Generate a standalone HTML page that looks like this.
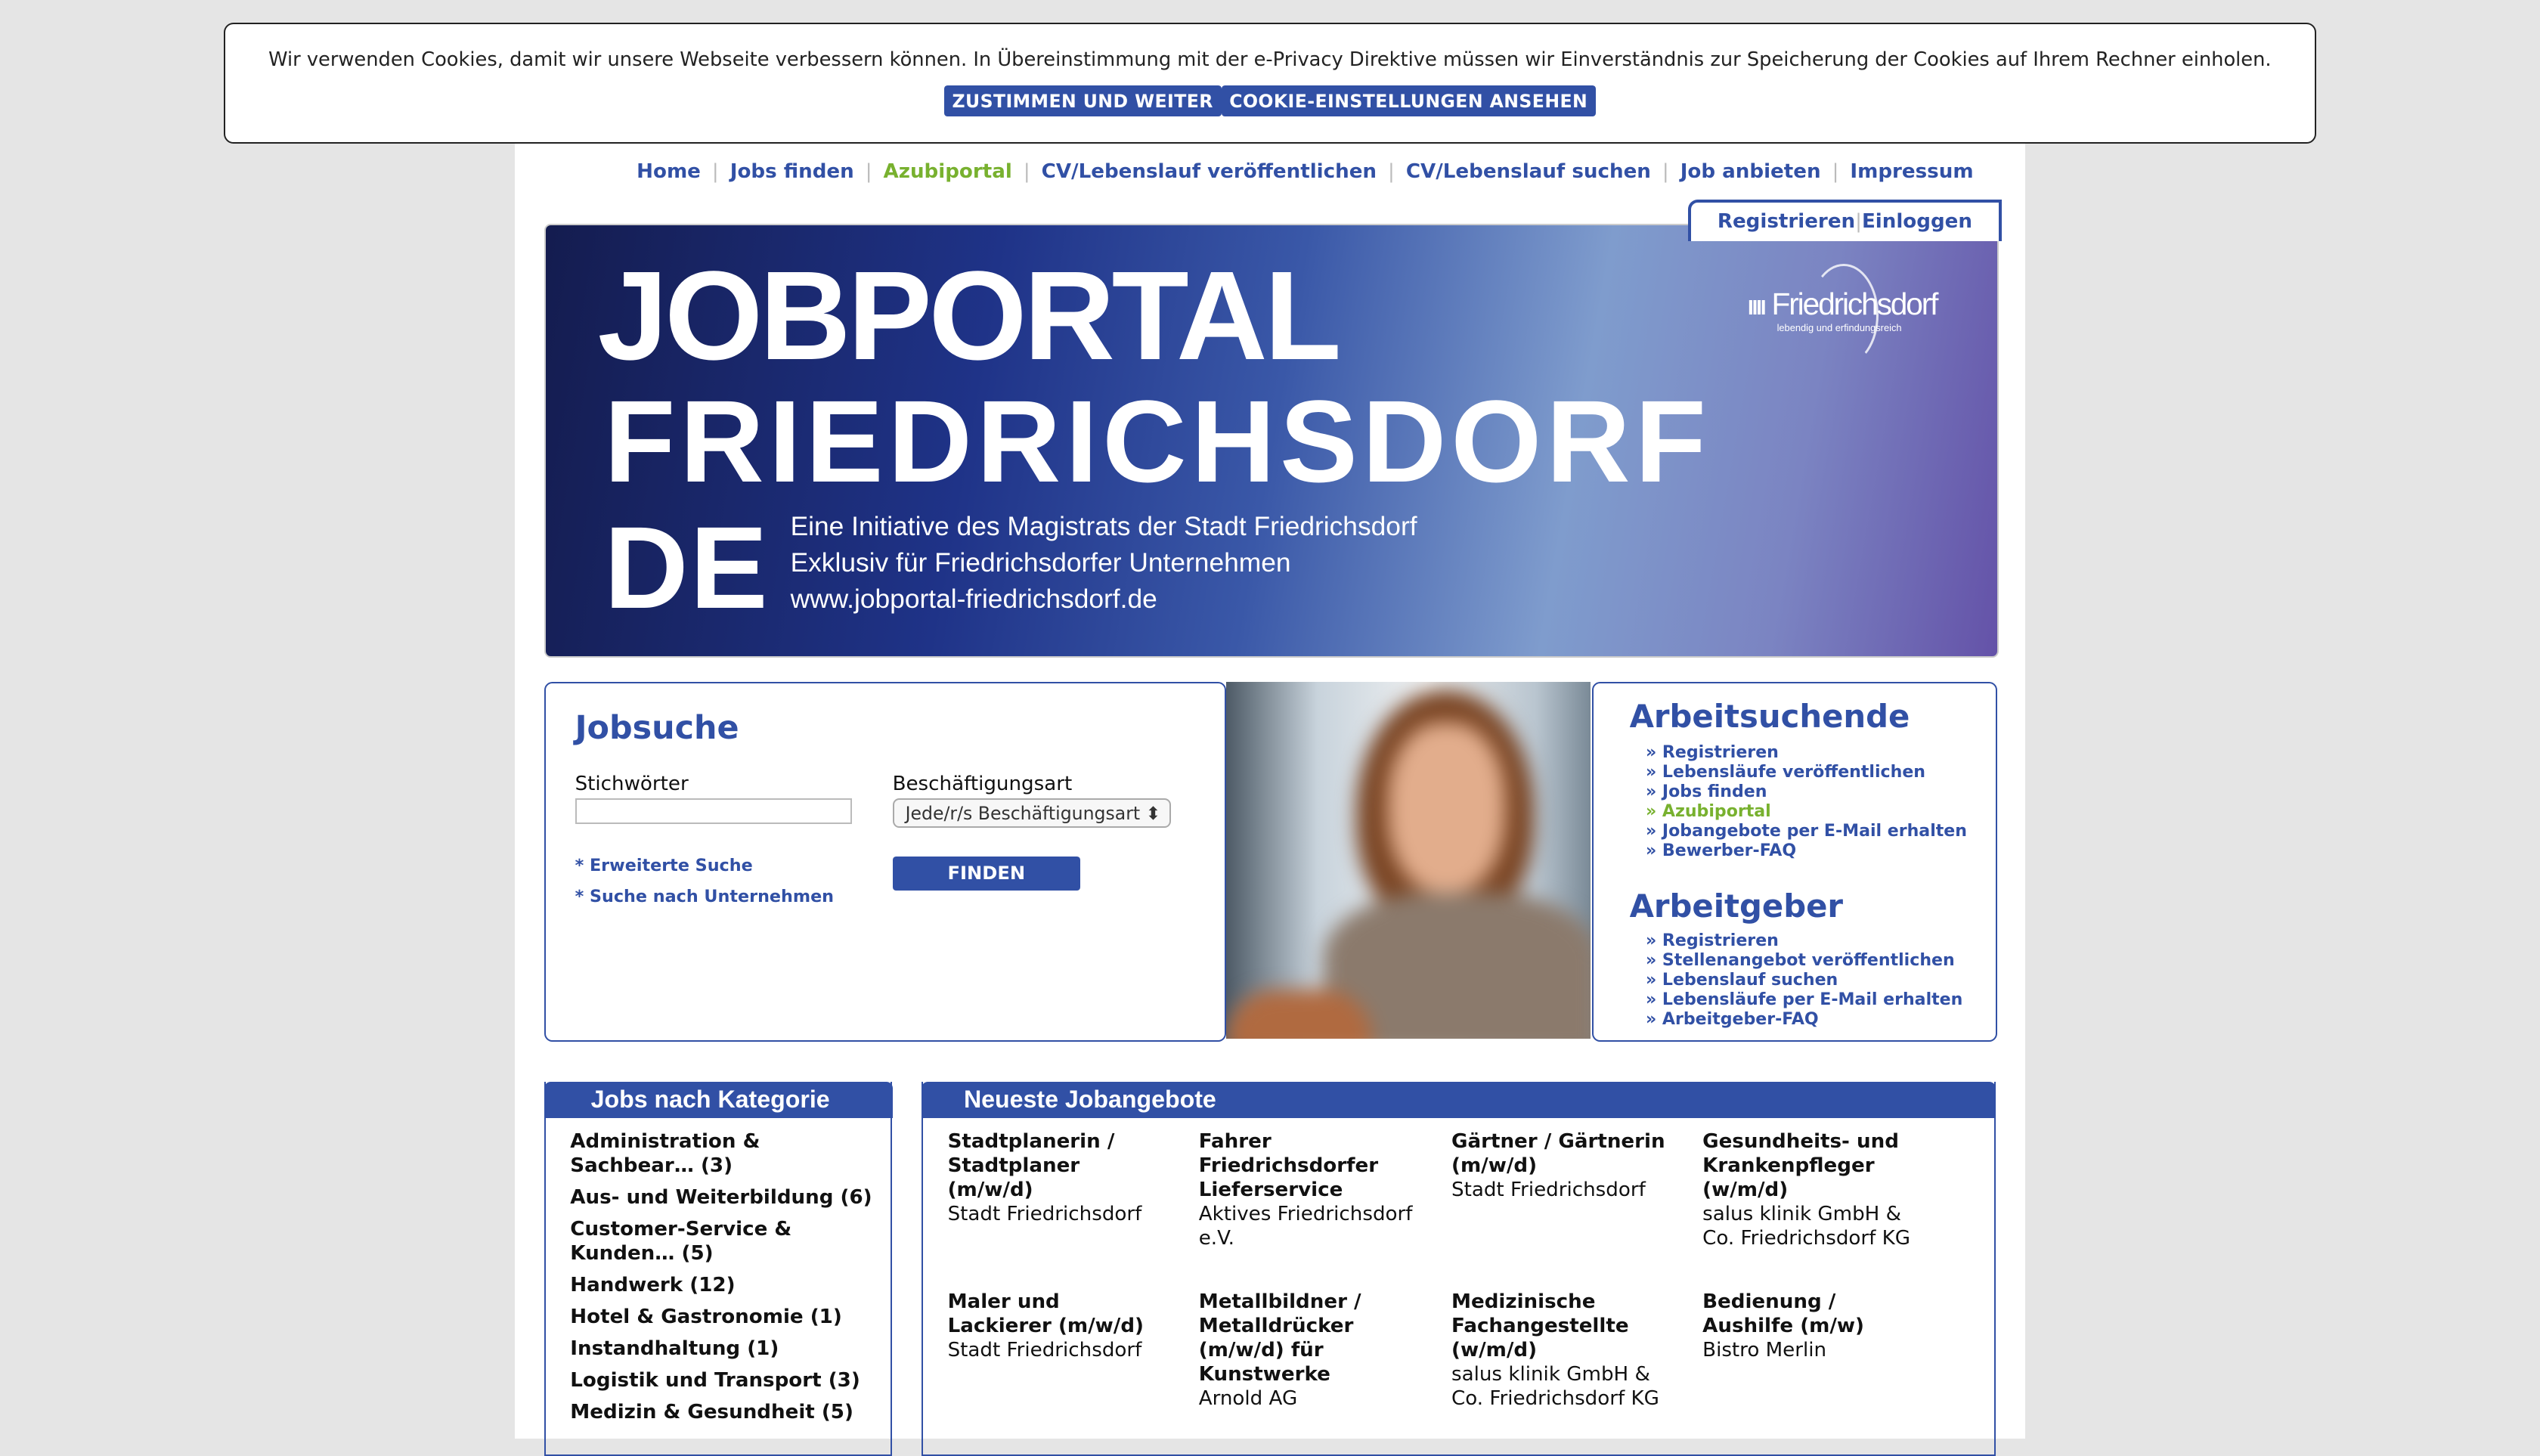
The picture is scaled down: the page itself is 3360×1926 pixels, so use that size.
<!DOCTYPE html>
<html><head><meta charset="utf-8"><style>
html{zoom:2.142857}
body{margin:0;width:1568px;height:880px;background:#e5e5e5;font-family:"DejaVu Sans","Liberation Sans",sans-serif;position:relative;overflow:hidden}
.a{position:absolute}
.b{color:#3150a5}
.g{color:#78b12f}
#page{left:318px;top:88px;width:932px;height:800px;background:#fff}
#cookie{left:138px;top:14px;width:1290px;height:73px;background:#fff;border:1px solid #222;border-radius:6px;font-size:12px;color:#222;text-align:center}
.btn{display:inline-block;background:#3150a5;color:#fff;font-weight:bold;font-size:11px;padding:3px 5px;border-radius:2px;letter-spacing:.2px}
#nav{top:99px;left:393px;font-size:12.2px;font-weight:bold;white-space:nowrap}
#nav span.s{color:#bbb;font-weight:normal;margin:0 7px}
#banner{left:336px;top:138px;width:896px;height:266px;border-radius:4px;border:1px solid #ccc;overflow:hidden;background:linear-gradient(100deg,#141c4f 0%,#1f3388 30%,#3a58a8 50%,#7f9ccd 70%,#7b84c2 85%,#6452a8 100%)}
.big{color:#fff;font-family:"Liberation Sans",sans-serif;font-weight:bold;letter-spacing:-2px}
.box{border:1px solid #3150a5;border-radius:5px;background:#fff}
.side li{list-style:none;font-size:10.3px;font-weight:bold;line-height:12.1px;white-space:nowrap}
.hd{background:#3150a5;color:#fff;font-weight:bold;font-size:15px;font-family:"Liberation Sans",sans-serif;border-radius:4px 4px 0 0;height:22px;line-height:22px}
.cat div{font-size:12.2px;font-weight:bold;color:#111;line-height:15px;margin-bottom:4.6px}
.job{font-size:12.2px;line-height:15px;color:#111;width:150px}
.job b{display:block}
</style></head><body>
<div id="page" class="a"></div>
<div id="cookie" class="a">
<div style="margin-top:15px">Wir verwenden Cookies, damit wir unsere Webseite verbessern können. In Übereinstimmung mit der e-Privacy Direktive müssen wir Einverständnis zur Speicherung der Cookies auf Ihrem Rechner einholen.</div>
<div style="margin-top:9px"><span class="btn">ZUSTIMMEN UND WEITER</span><span class="btn">COOKIE-EINSTELLUNGEN ANSEHEN</span></div>
</div>
<div id="nav" class="a b">Home<span class="s">|</span>Jobs finden<span class="s">|</span><span class="g">Azubiportal</span><span class="s">|</span>CV/Lebenslauf veröffentlichen<span class="s">|</span>CV/Lebenslauf suchen<span class="s">|</span>Job anbieten<span class="s">|</span>Impressum</div>
<div id="banner" class="a">
<div class="a big" style="left:32px;top:12px;font-size:78px">JOBPORTAL</div>
<div class="a big" style="left:36px;top:92px;font-size:72px;letter-spacing:2.8px">FRIEDRICHSDORF</div>
<div class="a big" style="left:36px;top:170px;font-size:72px;letter-spacing:1px">DE</div>
<div class="a" style="left:151px;top:175px;color:#fff;font-family:'Liberation Sans',sans-serif;font-size:16.5px;line-height:22.5px">Eine Initiative des Magistrats der Stadt Friedrichsdorf<br>Exklusiv für Friedrichsdorfer Unternehmen<br>www.jobportal-friedrichsdorf.de</div>
<div class="a" style="left:742px;top:38px;color:#fff;font-family:'Liberation Sans',sans-serif;font-size:19px;letter-spacing:-1px"><span style="font-size:13px;font-weight:bold">IIII</span> Friedrichsdorf<div style="font-size:6px;letter-spacing:0;margin-left:18px">lebendig und erfindungsreich</div></div>
<div class="a" style="left:780px;top:24px;width:40px;height:60px;border:1.5px solid #fff;border-radius:50%;border-left-color:transparent;border-bottom-color:transparent;opacity:.8"></div>
</div>
<div class="a b" style="left:1042px;top:123px;width:190px;height:24px;border:2px solid #3150a5;border-bottom:none;border-radius:6px 0 0 0;font-size:12.2px;font-weight:bold;text-align:center;line-height:24px;background:#fff;z-index:2;white-space:nowrap">Registrieren<span style="color:#bbb;font-weight:normal">|</span>Einloggen</div>
<div class="a box" style="left:336px;top:421px;width:419px;height:220px">
<div class="a b" style="left:18px;top:16px;font-size:20px;font-weight:bold">Jobsuche</div>
<div class="a" style="left:18px;top:55px;font-size:12.2px;color:#111">Stichwörter</div>
<div class="a" style="left:18px;top:71px;width:169px;height:14px;border:1px solid #bbb"></div>
<div class="a" style="left:214px;top:55px;font-size:12.2px;color:#111">Beschäftigungsart</div>
<div class="a" style="left:214px;top:71px;height:18px;border:1px solid #aaa;border-radius:4px;background:#f7f7f7;font-size:11px;color:#333;line-height:17px;padding-left:7px;box-sizing:border-box;width:172px;white-space:nowrap;overflow:hidden">Jede/r/s Beschäftigungsart ⬍</div>
<div class="a b" style="left:18px;top:103px;font-size:10.4px;font-weight:bold;line-height:19px">* Erweiterte Suche<br>* Suche nach Unternehmen</div>
<div class="a" style="left:214px;top:107px;width:116px;height:21px;background:#3150a5;border-radius:2px;color:#fff;font-weight:bold;font-size:11.3px;text-align:center;line-height:21px">FINDEN</div>
</div>
<div class="a" style="left:757px;top:421px;width:225px;height:220px;overflow:hidden;background:linear-gradient(90deg,#4d5a66 0%,#c8d3dc 25%,#eef0f1 55%,#b9c5cf 85%,#7a8a97 100%)">
<div class="a" style="left:0;top:0;width:225px;height:220px;filter:blur(6px)">
<div class="a" style="left:80px;top:5px;width:110px;height:150px;border-radius:50% 50% 45% 45%;background:#7a4524"></div>
<div class="a" style="left:100px;top:25px;width:72px;height:105px;border-radius:45%;background:#e2ad8c"></div>
<div class="a" style="left:60px;top:130px;width:170px;height:100px;border-radius:40% 40% 0 0;background:#8b7a6c"></div>
<div class="a" style="left:0;top:190px;width:90px;height:40px;background:#b06a40;border-radius:30px 30px 0 0"></div>
</div></div>
<div class="a box" style="left:983px;top:421px;width:248px;height:220px">
<div class="a b" style="left:22px;top:9px;font-size:19.5px;font-weight:bold">Arbeitsuchende</div>
<ul class="a side b" style="left:32px;top:37px;margin:0;padding:0"><li>» Registrieren</li><li>» Lebensläufe veröffentlichen</li><li>» Jobs finden</li><li class="g">» Azubiportal</li><li>» Jobangebote per E-Mail erhalten</li><li>» Bewerber-FAQ</li></ul>
<div class="a b" style="left:22px;top:126px;font-size:19.5px;font-weight:bold">Arbeitgeber</div>
<ul class="a side b" style="left:32px;top:153px;margin:0;padding:0"><li>» Registrieren</li><li>» Stellenangebot veröffentlichen</li><li>» Lebenslauf suchen</li><li>» Lebensläufe per E-Mail erhalten</li><li>» Arbeitgeber-FAQ</li></ul>
</div>
<div class="a" style="left:336px;top:668px;width:213px;height:230px;border:1px solid #3150a5;border-top:none"></div>
<div class="a hd" style="left:336px;top:668px;width:215px;text-align:center;padding-right:10px;box-sizing:border-box">Jobs nach Kategorie</div>
<div class="a cat" style="left:352px;top:697px"><div>Administration &amp;<br>Sachbear… (3)</div><div>Aus- und Weiterbildung (6)</div><div>Customer-Service &amp;<br>Kunden… (5)</div><div>Handwerk (12)</div><div>Hotel &amp; Gastronomie (1)</div><div>Instandhaltung (1)</div><div>Logistik und Transport (3)</div><div>Medizin &amp; Gesundheit (5)</div></div>
<div class="a" style="left:569px;top:668px;width:661px;height:230px;border:1px solid #3150a5;border-top:none"></div>
<div class="a hd" style="left:569px;top:668px;width:663px;padding-left:26px;box-sizing:border-box">Neueste Jobangebote</div>
<div class="a job" style="left:585px;top:697px"><b>Stadtplanerin /<br>Stadtplaner<br>(m/w/d)</b>Stadt Friedrichsdorf</div>
<div class="a job" style="left:740px;top:697px"><b>Fahrer<br>Friedrichsdorfer<br>Lieferservice</b>Aktives Friedrichsdorf e.V.</div>
<div class="a job" style="left:896px;top:697px"><b>Gärtner / Gärtnerin<br>(m/w/d)</b>Stadt Friedrichsdorf</div>
<div class="a job" style="left:1051px;top:697px"><b>Gesundheits- und<br>Krankenpfleger<br>(w/m/d)</b>salus klinik GmbH &amp;<br>Co. Friedrichsdorf KG</div>
<div class="a job" style="left:585px;top:796px"><b>Maler und<br>Lackierer (m/w/d)</b>Stadt Friedrichsdorf</div>
<div class="a job" style="left:740px;top:796px"><b>Metallbildner /<br>Metalldrücker<br>(m/w/d) für<br>Kunstwerke</b>Arnold AG</div>
<div class="a job" style="left:896px;top:796px"><b>Medizinische<br>Fachangestellte<br>(w/m/d)</b>salus klinik GmbH &amp;<br>Co. Friedrichsdorf KG</div>
<div class="a job" style="left:1051px;top:796px"><b>Bedienung /<br>Aushilfe (m/w)</b>Bistro Merlin</div>
</body></html>
